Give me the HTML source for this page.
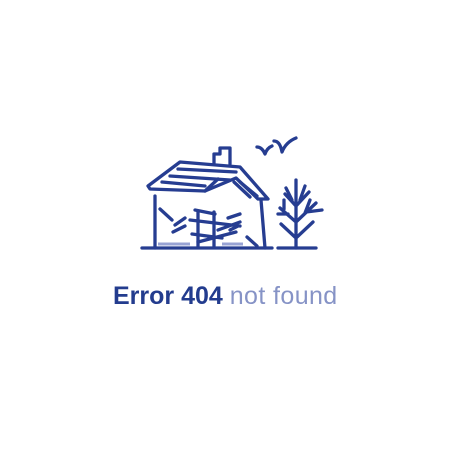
<!DOCTYPE html>
<html><head><style>
html,body{margin:0;padding:0;background:#fff;width:450px;height:450px;overflow:hidden}
.t{position:absolute;left:113px;top:282px;font-family:"Liberation Sans",sans-serif;font-size:25px;white-space:nowrap}
.b{color:#233c8e;font-weight:bold;letter-spacing:0px}.l{color:#8693c6;letter-spacing:0.4px}
</style></head><body>
<svg width="450" height="450" style="position:absolute;left:0;top:0" fill="none" stroke="#263d91" stroke-width="3.3" stroke-linecap="round" stroke-linejoin="round">
<path d="M257 147 q5 0 8 7 q2 -6 7 -8"/>
<path d="M274 141 q6 0 8 11 q4 -10 14 -14"/>
<path d="M214 163 v-9 h6 v-6 h10 v16"/>
<path d="M148 186 L180 162 L240 167 L268 199 L258 199 L236 178 L205 191 L150 189 Z" fill="#fff"/>
<path d="M170 176 L230 180 M162 182 L205 186 M178 169 L236 172 M240 182 L257 196 M234 182 L250 197"/>
<path d="M205 191 L218 179"/>
<path d="M155 196 V248 M261 200 L265 248"/>
<path d="M142 248 H272 M278 248 H316"/>
<path d="M160 209 L172 220 M175 225 L185 218 M173 232 L185 226 M195 210 L215 214 M190 220 L240 226 M192 234 L222 238 M218 230 L240 222 M198 242 L236 232 M228 218 L240 214 M230 230 L238 226 M247 237 L257 246"/>
<path d="M198 212 V246 M214 212 V246"/>
<path d="M296 180 V248 M296 238 L281 224 M296 238 L313 222 M296 222 L280 208 M296 222 L316 203 M296 206 L285 194 M296 206 L309 192 M288 214 L278 214 M306 212 L322 210 M305 213 L310 200 M284 209 V200 M300 200 L305 186 M292 200 L286 188"/>
</svg>
<svg width="450" height="450" style="position:absolute;left:0;top:0" stroke="#98a3d4" stroke-width="3">
<path d="M158 244 H190 M222 244 H243"/>
</svg>
<div class="t"><span class="b">Error 404</span> <span class="l">not found</span></div>
</body></html>
